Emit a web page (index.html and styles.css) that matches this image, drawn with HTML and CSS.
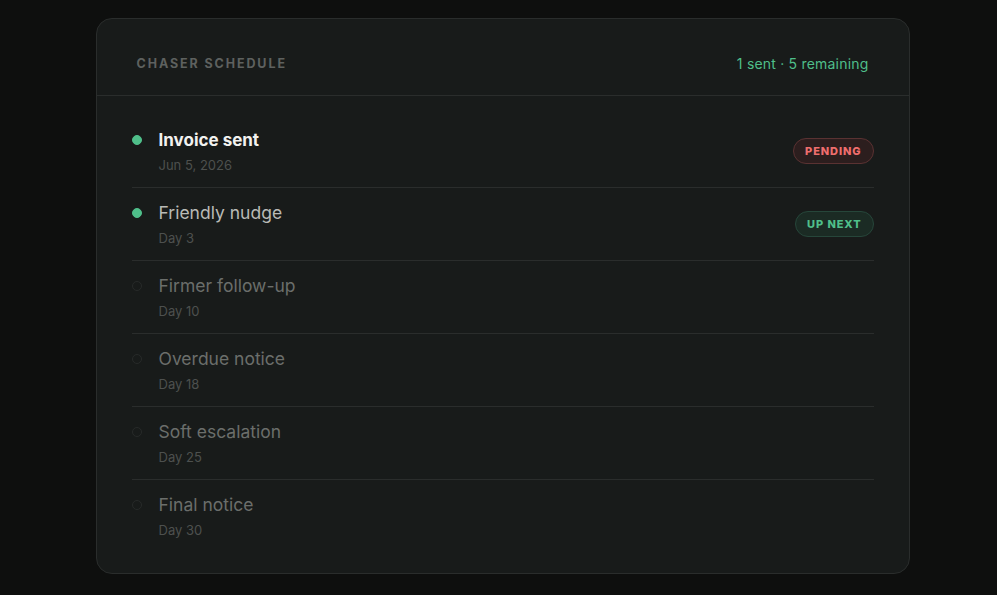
FILE: index.html
```html
<!DOCTYPE html>
<html lang="en">

<head>
    <meta charset="UTF-8">
    <meta name="viewport" content="width=device-width, initial-scale=1.0">
    <title>Chaser Schedule</title>
    <link rel="stylesheet" href="styles.css">
</head>

<body>
    <div class="card">
        <!-- Header -->
        <div class="card-header">
            <span class="card-title">Chaser Schedule</span>
            <span class="card-summary">1 sent · 5 remaining</span>
        </div>

        <!-- Steps -->
        <ul class="steps">
            <li class="step done current">
                <span class="dot"></span>
                <div class="step-text">
                    <div class="step-name">Invoice sent</div>
                    <div class="step-date">Jun 5, 2026</div>
                </div>
                <span class="badge badge-pending">Pending</span>
            </li>
            <li class="step done">
                <span class="dot"></span>
                <div class="step-text">
                    <div class="step-name">Friendly nudge</div>
                    <div class="step-date">Day 3</div>
                </div>
                <span class="badge badge-next">Up next</span>
            </li>
            <li class="step">
                <span class="dot"></span>
                <div class="step-text">
                    <div class="step-name">Firmer follow-up</div>
                    <div class="step-date">Day 10</div>
                </div>
            </li>
            <li class="step">
                <span class="dot"></span>
                <div class="step-text">
                    <div class="step-name">Overdue notice</div>
                    <div class="step-date">Day 18</div>
                </div>
            </li>
            <li class="step">
                <span class="dot"></span>
                <div class="step-text">
                    <div class="step-name">Soft escalation</div>
                    <div class="step-date">Day 25</div>
                </div>
            </li>
            <li class="step">
                <span class="dot"></span>
                <div class="step-text">
                    <div class="step-name">Final notice</div>
                    <div class="step-date">Day 30</div>
                </div>
            </li>
        </ul>
    </div>
</body>

</html>
```

FILE: styles.css
```css
body {
    font-family: 'Inter', 'Noto Sans', sans-serif;
    background-color: #0e0f0e;
    color: #ffffff;
    margin: 0;
    padding: 18px 0 0 8px;
}

.card {
    width: 814px;
    height: 556px;
    margin: 0 auto;
    background-color: #181b1a;
    border: 1px solid #2a2d2c;
    border-radius: 16px;
    box-sizing: border-box;
}

.card-header {
    display: flex;
    justify-content: space-between;
    align-items: center;
    height: 77px;
    box-sizing: border-box;
    padding: 37px 40px 24px;
    border-bottom: 1px solid #2a2d2c;
}

.card-title {
    font-size: 12.5px;
    line-height: 16px;
    font-weight: 700;
    letter-spacing: 1.9px;
    text-transform: uppercase;
    color: #5e615f;
}

.card-summary {
    font-size: 14px;
    line-height: 16px;
    letter-spacing: 0.2px;
    color: #4fbf8a;
}

.steps {
    list-style: none;
    margin: 0;
    padding: 19px 35px 20px;
}

.step {
    display: flex;
    align-items: center;
    height: 73px;
    box-sizing: border-box;
    border-bottom: 1px solid #2a2d2c;
}

.step:last-child {
    border-bottom: none;
}

.dot {
    width: 10px;
    height: 10px;
    border-radius: 50%;
    border: 1px solid #272a29;
    box-sizing: border-box;
    margin-right: 17px;
    align-self: flex-start;
    margin-top: 20px;
}

.step.done .dot {
    background-color: #4fbf8a;
    border-color: #4fbf8a;
}

.step-text {
    flex: 1;
}

.step-name {
    font-size: 17.5px;
    line-height: 24px;
    color: #6b6e6b;
}

.step.done .step-name {
    color: #b9bab6;
}

.step.current .step-name {
    font-size: 17px;
    font-weight: 700;
    color: #f2f2f0;
}

.step-date {
    font-size: 13px;
    line-height: 19px;
    margin-top: 4px;
    color: #4d504e;
}

.badge {
    font-size: 11px;
    font-weight: 800;
    letter-spacing: 0.9px;
    text-transform: uppercase;
    padding: 0 11px;
    height: 26px;
    line-height: 24px;
    box-sizing: border-box;
    border-radius: 13px;
    border: 1px solid;
}

.badge-pending {
    color: #ef6e6e;
    background-color: #2c1e1e;
    border-color: #5a3232;
}

.badge-next {
    color: #4fbf8a;
    background-color: #1b2b24;
    border-color: #26463a;
}
```
